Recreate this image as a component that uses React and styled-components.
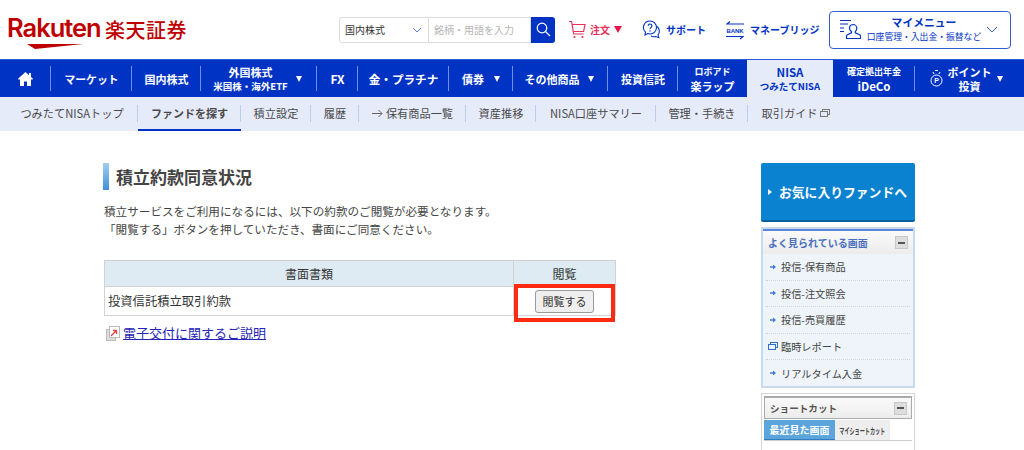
// App.jsx
import React from 'react';
import styled, { createGlobalStyle } from 'styled-components';

const GlobalStyle = createGlobalStyle`
    html, body {
        margin: 0;
        padding: 0;
        background: #fff;
        overflow: hidden;
    }
    body {
        font-family: "Noto Sans CJK JP", "Noto Sans", sans-serif;
        color: #333;
    }
    * { box-sizing: border-box; }
`;

const Page = styled.div`
    width: 1024px;
    height: 450px;
    overflow: hidden;
`;

/* top header */
const TopBar = styled.header`
    height: 59px;
    display: flex;
    align-items: center;
    position: relative;
`;

const Logo = styled.div`
    width: 339px;
    padding-left: 7px;
    display: flex;
    align-items: center;
    gap: 5px;
    color: #bf0000;
    flex: none;
`;

const LogoWord = styled.div`
    position: relative;
    font-family: "Inter", sans-serif;
    font-size: 25.5px;
    font-weight: 600;
    letter-spacing: -1px;
    line-height: 30px;
    width: 93px;
    padding-bottom: 3px;
`;

const LogoSwoosh = styled.svg`
    position: absolute;
    left: 20px;
    bottom: -3px;
`;

const LogoJa = styled.div`
    font-size: 20px;
    font-weight: 500;
    letter-spacing: 0.5px;
    line-height: 30px;
`;

const Search = styled.div`
    width: 216px;
    height: 26px;
    display: flex;
    flex: none;
`;

const SearchSelect = styled.div`
    width: 90px;
    border: 1px solid #dcdcdc;
    border-radius: 3px 0 0 3px;
    display: flex;
    align-items: center;
    justify-content: space-between;
    padding: 0 6px 0 5px;
    font-size: 10px;
    color: #333;
`;

const SearchInput = styled.div`
    width: 102px;
    border: 1px solid #dcdcdc;
    border-left: 0;
    display: flex;
    align-items: center;
    padding-left: 5px;
    font-size: 10px;
    color: #b4b4b4;
    white-space: nowrap;
    overflow: hidden;
`;

const SearchButton = styled.div`
    width: 24px;
    background: #0033c4;
    border-radius: 0 3px 3px 0;
    display: flex;
    align-items: center;
    justify-content: center;
`;

const ToolLink = styled.div`
    display: flex;
    align-items: center;
    flex: none;
    margin-left: ${(p) => p.$left}px;
    gap: ${(p) => p.$gap}px;
    font-size: 10px;
    font-weight: 700;
    color: ${(p) => p.$color};
    white-space: nowrap;
`;

const MyMenu = styled.div`
    margin-left: auto;
    margin-right: 13px;
    width: 182px;
    height: 38px;
    border: 1px solid #2f5fd0;
    border-radius: 4px;
    display: flex;
    align-items: center;
    padding-left: 10px;
    color: #0033c4;
    flex: none;
`;

const MyMenuText = styled.div`
    width: 116px;
    margin-left: 5px;
    text-align: center;
    line-height: 13.4px;
    white-space: nowrap;
`;

const MyMenuTitle = styled.div`
    font-size: 10.8px;
    font-weight: 700;
`;

const MyMenuSub = styled.div`
    font-size: 8.8px;
`;

const MyMenuChevron = styled.svg`
    margin-left: 4px;
`;

/* main navigation */
const Nav = styled.nav`
    height: 38px;
    background: #0033c4;
    display: flex;
    color: #fff;
    border-top: 1px solid #2a5ad6;
`;

const NavItem = styled.div`
    width: ${(p) => p.$w}px;
    flex: none;
    position: relative;
    display: flex;
    align-items: center;
    justify-content: center;
    gap: ${(p) => p.$gap || 6}px;
    padding-right: ${(p) => p.$pr || 0}px;
    font-size: ${(p) => p.$size || 11}px;
    font-weight: 700;
    text-align: center;
    white-space: nowrap;
    background: ${(p) => (p.$active ? '#e6ebfa' : 'transparent')};
    color: ${(p) => (p.$active ? '#0033c4' : '#fff')};

    &::after {
        content: '';
        display: ${(p) => (p.$sep ? 'block' : 'none')};
        position: absolute;
        right: 0;
        top: 6px;
        bottom: 6px;
        width: 1px;
        background: #6f90e6;
    }
`;

const NavStack = styled.div`
    display: flex;
    flex-direction: column;
    align-items: center;
    line-height: 14px;
`;

const NavLine = styled.span`
    font-size: ${(p) => p.$size || 11}px;
    font-weight: 700;
`;

const Caret = styled.span`
    width: 0;
    height: 0;
    border-left: ${(p) => (p.$big ? 4 : 3.5)}px solid transparent;
    border-right: ${(p) => (p.$big ? 4 : 3.5)}px solid transparent;
    border-top: ${(p) => (p.$big ? 7 : 6)}px solid ${(p) => p.$color || '#fff'};
    flex: none;
`;

/* sub navigation */
const SubNav = styled.div`
    height: 34px;
    background: #e6ebfa;
    display: flex;
`;

const SubItem = styled.div`
    width: ${(p) => p.$w}px;
    flex: none;
    position: relative;
    display: flex;
    align-items: center;
    justify-content: center;
    gap: 3px;
    padding-left: ${(p) => p.$pl || 0}px;
    font-size: ${(p) => (p.$active ? 11 : 11.2)}px;
    font-weight: ${(p) => (p.$active ? 700 : 400)};
    color: #4a4a4a;
    white-space: nowrap;
    border-bottom: 2px solid ${(p) => (p.$active ? '#0033c4' : 'transparent')};

    &::after {
        content: '';
        display: ${(p) => (p.$sep ? 'block' : 'none')};
        position: absolute;
        right: 0;
        top: 8px;
        height: 17px;
        width: 1px;
        background: #bccdf0;
    }
`;

/* content */
const Main = styled.main`
    display: flex;
    padding: 32px 0 0 104px;
`;

const Content = styled.section`
    width: 512px;
    flex: none;
`;

const Heading = styled.h1`
    margin: 0 0 0 -1px;
    height: 27px;
    display: flex;
    align-items: center;
    padding-left: 7px;
    font-size: 17px;
    font-weight: 700;
    color: #444;
    line-height: 27px;
    border-left: 6px solid #4f9bdc;
    border-image: linear-gradient(to bottom, #a9d0f0, #3c8fd6) 1;
`;

const Lead = styled.p`
    margin: 13px 0 0;
    font-size: 11.6px;
    line-height: 17.5px;
    color: #444;
`;

const DocTable = styled.table`
    margin-top: 22px;
    width: 512px;
    border-collapse: collapse;
    table-layout: fixed;
`;

const HeadCell = styled.th`
    background: #deebf2;
    border: 1px solid #cfd3d6;
    height: 26px;
    padding: 0;
    font-size: 12px;
    font-weight: 400;
    color: #333;
    width: ${(p) => p.$w}px;
`;

const BodyCell = styled.td`
    border: 1px solid #cfd3d6;
    height: 29px;
    padding: 0 3px;
    font-size: 12.3px;
    color: #333;
    text-align: ${(p) => p.$align || 'left'};
    position: relative;
`;

const ViewButton = styled.button`
    width: 59px;
    height: 23px;
    padding: 0;
    border: 1px solid #9a9a9a;
    border-radius: 3px;
    background: #efefef;
    font-family: inherit;
    font-size: 11px;
    color: #333;
    vertical-align: middle;
`;

const Highlight = styled.div`
    position: absolute;
    left: 0;
    right: 0;
    top: -3px;
    height: 38px;
    border: 4px solid #ff2a12;
    pointer-events: none;
`;

const DocLink = styled.div`
    margin-top: 8px;
    display: flex;
    align-items: center;
    gap: 3px;
    padding-left: 2px;
    font-size: 13px;
    line-height: 18px;
`;

const LinkText = styled.a`
    color: #2323b4;
    text-decoration: underline;
`;

/* side column */
const Side = styled.aside`
    margin-left: 145px;
    width: 154px;
    flex: none;
    display: flex;
    flex-direction: column;
    gap: 5px;
`;

const FavButton = styled.div`
    height: 59px;
    background: #0a82cf;
    border-bottom: 2px solid #06619e;
    border-radius: 2px;
    display: flex;
    align-items: center;
    padding-left: 7px;
    gap: 7px;
    color: #fff;
    font-size: 12.8px;
    font-weight: 700;
    white-space: nowrap;
`;

const FavArrow = styled.span`
    width: 0;
    height: 0;
    border-top: 3px solid transparent;
    border-bottom: 3px solid transparent;
    border-left: 4px solid #fff;
    flex: none;
`;

const Panel = styled.div`
    height: 161px;
    border: 2px solid #c6daef;
    background: #eef4fa;
`;

const PanelHead = styled.div`
    height: 25px;
    border-top: 2px solid #5b86d8;
    background: linear-gradient(to bottom, #fafafa, #ececec);
    display: flex;
    align-items: center;
    justify-content: space-between;
    padding: 0 5px 0 5px;
    font-size: 10px;
    font-weight: 700;
    color: ${(p) => p.$color};
`;

const Collapse = styled.span`
    width: 13px;
    height: 13px;
    background: #dedede;
    border: 1px solid #c8c8c8;
    display: flex;
    align-items: center;
    justify-content: center;

    &::before {
        content: '';
        width: 7px;
        height: 2px;
        background: #555;
    }
`;

const PanelList = styled.ul`
    list-style: none;
    margin: 0;
    padding: 0 3px;
`;

const PanelRow = styled.li`
    height: 26.5px;
    display: flex;
    align-items: center;
    font-size: 10.2px;
    color: #444;
    border-bottom: 1px dotted #cdd5dc;
    white-space: nowrap;

    &:last-child {
        border-bottom: 0;
    }
`;

const RowIcon = styled.span`
    width: 13px;
    margin-right: 2px;
    display: flex;
    justify-content: center;
    flex: none;
`;

const ShortcutPanel = styled.div`
    border: 1px solid #d4d4d4;
    padding: 2px;
    height: 60px;
`;

const ShortcutHead = styled.div`
    height: 23px;
    border: 1px solid #aaa;
    border-top-width: 2px;
    background: linear-gradient(to bottom, #fafafa, #ececec);
    display: flex;
    align-items: center;
    justify-content: space-between;
    padding: 0 4px 0 5px;
    font-size: 9.6px;
    font-weight: 700;
    color: #555;
`;

const Tabs = styled.div`
    display: flex;
    margin-top: 1px;
    height: 21px;
    border-bottom: 1px solid #ccc;
`;

const Tab = styled.div`
    width: ${(p) => p.$w}px;
    display: flex;
    align-items: center;
    justify-content: center;
    white-space: nowrap;
    font-size: 10px;
    font-weight: 700;
    background: ${(p) => (p.$active ? '#5ba4dc' : '#eee')};
    color: ${(p) => (p.$active ? '#fff' : '#444')};
    border-bottom: ${(p) => (p.$active ? '1px solid #2f7cc0' : '0')};
`;

/* tall, squeezed label that has to fit the narrow second tab */
const TabSqueezed = styled.span`
    font-size: 8.5px;
    display: inline-block;
    transform: scaleX(0.6);
`;

const CartIcon = () => (
    <svg width="18" height="20" viewBox="0 0 18 20" fill="none" stroke="#e8315a" strokeWidth="1.2">
        <path d="M1 1.5h2.6l2 12.5h10" />
        <path d="M4 4.5h13l-1.4 7H5.2" />
        <circle cx="6.5" cy="17" r="1.1" fill="#e8315a" stroke="none" />
        <circle cx="14.5" cy="17" r="1.1" fill="#e8315a" stroke="none" />
    </svg>
);

const SupportIcon = () => (
    <svg width="19" height="19" viewBox="0 0 19 19" fill="none" stroke="#0033c4" strokeWidth="1.1">
        <path d="M8 1a6.5 6.5 0 0 1 0 13c-.8 0-1.5-.1-2.2-.4L3 15l.5-2.8A6.5 6.5 0 0 1 8 1z" fill="#fff" />
        <path d="M15.2 6.5a6 6 0 0 1 .8 8.4l.8 2.8-3.2-1.2a6 6 0 0 1-4.600-.5" />
        <path d="M6.100 5.800a1.900 1.900 0 1 1 2.900 1.700c-.7.4-1 .8-1 1.600" />
        <circle cx="8" cy="11" r=".7" fill="#0033c4" stroke="none" />
    </svg>
);

const BankIcon = () => (
    <svg width="18" height="20" viewBox="0 0 18 20" fill="none" stroke="#0033c4" strokeWidth="1.1">
        <path d="M4 1.500l-3 2.500h17" />
        <path d="M0 16.500h17l-3 2.500" />
        <text x="0.500" y="12.500" fontSize="6" fontWeight="700" fill="#0033c4" stroke="none" fontFamily="Liberation Sans, sans-serif" textLength="17">BANK</text>
    </svg>
);

const MenuUserIcon = () => (
    <svg width="21" height="21" viewBox="0 0 21 21" fill="none" stroke="#0033c4" strokeWidth="1.2" style={{ flex: 'none' }}>
        <path d="M0 1.500h11M0 5h8M0 9h4M0 12.500h4" />
        <path d="M13 5.500a3.800 3.800 0 0 1 3.800 3.800c0 1.700-1 2.700-1.500 3.400v1.200l4.300 1.800c.6.300 1 .8 1 1.500v2.300H6.500v-2.300c0-.7.400-1.200 1-1.500l4-1.800v-1.200c-.6-.7-2-1.700-2-3.400A3.800 3.800 0 0 1 13 5.500z" />
    </svg>
);

const HomeIcon = () => (
    <svg width="15" height="14" viewBox="0 0 15 14" fill="#fff">
        <path d="M7.500 0L0 6.800l1 1.100 1-.9V14h4V9.500h3V14h4V7l1 .9 1-1.100-2-1.800V1h-2v2.200z" />
    </svg>
);

const CoinIcon = () => (
    <svg width="13" height="19" viewBox="0 0 13 19" fill="none" stroke="#fff" strokeWidth="1">
        <circle cx="6.500" cy="11.500" r="5.500" />
        <path d="M5 1.500h3M4 5l-1-2M9 5l1-2" />
        <text x="6.500" y="14" fontSize="7" fill="#fff" stroke="none" textAnchor="middle" fontFamily="Liberation Sans, sans-serif">P</text>
    </svg>
);

const WindowIcon = ({ color, size }) => (
    <svg width={size} height={size - 2} viewBox="0 0 10 8" fill="none" stroke={color} strokeWidth="1" style={{ flex: 'none' }}>
        <rect x="2.500" y="0.500" width="7" height="5" />
        <rect x="0.500" y="2.500" width="7" height="5" fill={color === '#777' ? '#e6ebfa' : '#eef4fa'} />
    </svg>
);

const RowArrow = () => (
    <svg width="6" height="6" viewBox="0 0 6 6" fill="#3c7fd0">
        <path d="M0 2.300h3V.5L6 3 3 5.500V3.700H0z" />
    </svg>
);

const subItems = [
    { w: 138, label: 'つみたてNISAトップ', sep: true, pl: 6 },
    { w: 103, label: 'ファンドを探す', sep: true, active: true },
    { w: 70, label: '積立設定', sep: true },
    { w: 48, label: '履歴', sep: true },
    { w: 107, label: '保有商品一覧', sep: true, arrow: true },
    { w: 70, label: '資産推移', sep: true },
    { w: 120, label: 'NISA口座サマリー', sep: true },
    { w: 92, label: '管理・手続き', sep: true },
    { w: 96, label: '取引ガイド', win: true },
];

const sideRows = [
    { label: '投信-保有商品' },
    { label: '投信-注文照会' },
    { label: '投信-売買履歴' },
    { label: '臨時レポート', win: true },
    { label: 'リアルタイム入金' },
];

function App() {
    return (
        <Page>
            <GlobalStyle />
            <TopBar>
                <Logo>
                    <LogoWord>
                        Rakuten
                        <LogoSwoosh width="56" height="5" viewBox="0 0 56 5">
                            <path d="M0 0h56L8 5z" fill="#bf0000" />
                        </LogoSwoosh>
                    </LogoWord>
                    <LogoJa>楽天証券</LogoJa>
                </Logo>
                <Search>
                    <SearchSelect>
                        国内株式
                        <svg width="10" height="6" viewBox="0 0 10 6" fill="none" stroke="#5a7fd8" strokeWidth="1">
                            <path d="M1 1l4 4 4-4" />
                        </svg>
                    </SearchSelect>
                    <SearchInput>銘柄・用語を入力</SearchInput>
                    <SearchButton>
                        <svg width="15" height="15" viewBox="0 0 15 15" fill="none" stroke="#fff" strokeWidth="1.2">
                            <circle cx="6" cy="6" r="4.800" />
                            <path d="M9.500 9.500L14 14" />
                        </svg>
                    </SearchButton>
                </Search>
                <ToolLink $left={13} $gap={4} $color="#e8315a">
                    <CartIcon />
                    注文
                    <Caret $big $color="#e8154a" />
                </ToolLink>
                <ToolLink $left={20} $gap={5} $color="#0033c4">
                    <SupportIcon />
                    サポート
                </ToolLink>
                <ToolLink $left={20} $gap={6} $color="#0033c4">
                    <BankIcon />
                    マネーブリッジ
                </ToolLink>
                <MyMenu>
                    <MenuUserIcon />
                    <MyMenuText>
                        <MyMenuTitle>マイメニュー</MyMenuTitle>
                        <MyMenuSub>口座管理・入出金・振替など</MyMenuSub>
                    </MyMenuText>
                    <MyMenuChevron width="12" height="7" viewBox="0 0 12 7" fill="none" stroke="#2f5fd0" strokeWidth="1">
                        <path d="M1 1l5 5 5-5" />
                    </MyMenuChevron>
                </MyMenu>
            </TopBar>

            <Nav>
                <NavItem $w={51} $sep><HomeIcon /></NavItem>
                <NavItem $w={81} $sep $size={10.8}>マーケット</NavItem>
                <NavItem $w={69} $sep>国内株式</NavItem>
                <NavItem $w={116} $sep $gap={8} $pr={3}>
                    <NavStack>
                        <NavLine $size={11}>外国株式</NavLine>
                        <NavLine $size={9.5}>米国株・海外ETF</NavLine>
                    </NavStack>
                    <Caret />
                </NavItem>
                <NavItem $w={41} $sep $size={12}>FX</NavItem>
                <NavItem $w={91} $sep $size={11.6}>金・プラチナ</NavItem>
                <NavItem $w={64} $sep $gap={10}>債券<Caret /></NavItem>
                <NavItem $w={95} $sep $gap={8} $pr={3}>その他商品<Caret /></NavItem>
                <NavItem $w={70} $sep>投資信託</NavItem>
                <NavItem $w={69}>
                    <NavStack>
                        <NavLine $size={9}>ロボアド</NavLine>
                        <NavLine $size={11}>楽ラップ</NavLine>
                    </NavStack>
                </NavItem>
                <NavItem $w={86} $active>
                    <NavStack>
                        <NavLine $size={11.5}>NISA</NavLine>
                        <NavLine $size={9.5}>つみたてNISA</NavLine>
                    </NavStack>
                </NavItem>
                <NavItem $w={82} $sep>
                    <NavStack>
                        <NavLine $size={9}>確定拠出年金</NavLine>
                        <NavLine $size={11.5}>iDeCo</NavLine>
                    </NavStack>
                </NavItem>
                <NavItem $w={109} $gap={5} $pr={7}>
                    <CoinIcon />
                    <NavStack>
                        <NavLine $size={11}>ポイント</NavLine>
                        <NavLine $size={11}>投資</NavLine>
                    </NavStack>
                    <Caret />
                </NavItem>
            </Nav>

            <SubNav>
                {subItems.map((item) => (
                    <SubItem key={item.label} $w={item.w} $sep={item.sep} $active={item.active} $pl={item.pl}>
                        {item.arrow && (
                            <svg width="11" height="9" viewBox="0 0 11 9" fill="none" stroke="#555" strokeWidth="0.9">
                                <path d="M0 4.500h10M6.500 1L10 4.500 6.500 8" />
                            </svg>
                        )}
                        {item.label}
                        {item.win && <WindowIcon color="#777" size={10} />}
                    </SubItem>
                ))}
            </SubNav>

            <Main>
                <Content>
                    <Heading>積立約款同意状況</Heading>
                    <Lead>
                        積立サービスをご利用になるには、以下の約款のご閲覧が必要となります。
                        <br />
                        「閲覧する」ボタンを押していただき、書面にご同意ください。
                    </Lead>
                    <DocTable>
                        <thead>
                            <tr>
                                <HeadCell $w={409}>書面書類</HeadCell>
                                <HeadCell>閲覧</HeadCell>
                            </tr>
                        </thead>
                        <tbody>
                            <tr>
                                <BodyCell>投資信託積立取引約款</BodyCell>
                                <BodyCell $align="center">
                                    <ViewButton>閲覧する</ViewButton>
                                    <Highlight />
                                </BodyCell>
                            </tr>
                        </tbody>
                    </DocTable>
                    <DocLink>
                        <svg width="14" height="15" viewBox="0 0 14 15" style={{ flex: 'none' }}>
                            <rect x="0.500" y="3.500" width="9" height="11" fill="#ddd" stroke="#bbb" />
                            <rect x="3.500" y="0.500" width="10" height="11" fill="#fff" stroke="#bbb" />
                            <path d="M5 10l5-5M7 4.500h3.500V8" fill="none" stroke="#e8413a" strokeWidth="1.300" />
                        </svg>
                        <LinkText>電子交付に関するご説明</LinkText>
                    </DocLink>
                </Content>

                <Side>
                    <FavButton>
                        <FavArrow />
                        お気に入りファンドへ
                    </FavButton>
                    <Panel>
                        <PanelHead $color="#4a6fc0">
                            よく見られている画面
                            <Collapse />
                        </PanelHead>
                        <PanelList>
                            {sideRows.map((row) => (
                                <PanelRow key={row.label}>
                                    <RowIcon>
                                        {row.win ? <WindowIcon color="#2f6fd0" size={10} /> : <RowArrow />}
                                    </RowIcon>
                                    {row.label}
                                </PanelRow>
                            ))}
                        </PanelList>
                    </Panel>
                    <ShortcutPanel>
                        <ShortcutHead>
                            ショートカット
                            <Collapse />
                        </ShortcutHead>
                        <Tabs>
                            <Tab $w={71} $active>最近見た画面</Tab>
                            <Tab $w={55}><TabSqueezed>マイショートカット</TabSqueezed></Tab>
                        </Tabs>
                    </ShortcutPanel>
                </Side>
            </Main>
        </Page>
    );
}

export default App;
